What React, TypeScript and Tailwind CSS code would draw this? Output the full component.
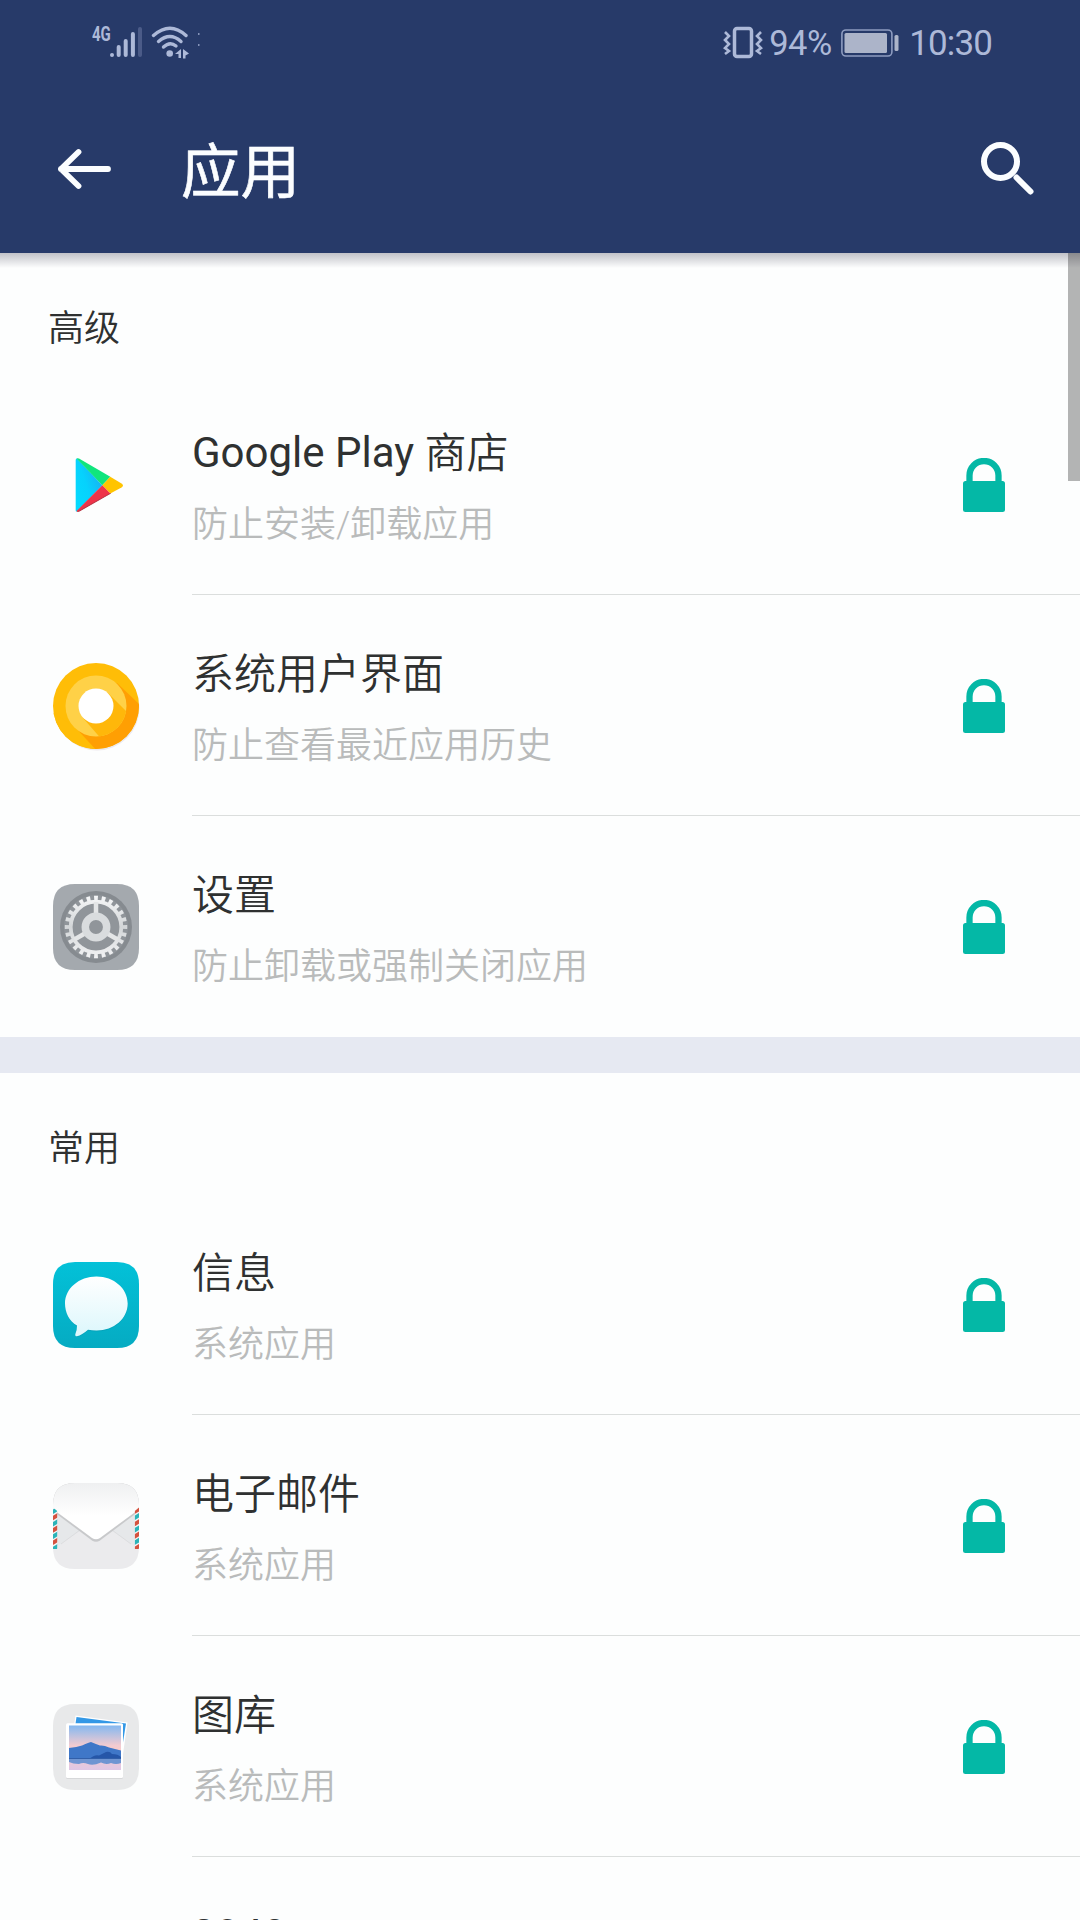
import type { ReactNode } from "react";

function SignalIcon() {
  return (
    <svg className="absolute left-[90px] top-[22px]" width="112" height="38" viewBox="0 0 112 38">
      <g stroke="#adb9d8" strokeLinecap="round" strokeWidth="4">
        <path d="M22 33v0" />
        <path d="M28.7 33v-8" />
        <path d="M35.7 33v-14" />
        <path d="M42.9 33v-21" />
        <path d="M50 33v-26" stroke="#4b5b88" />
      </g>
      <g fill="none" stroke="#adb9d8" strokeLinecap="round" strokeWidth="3.4">
        <path d="M63.500 13.500Q80 -1 96 13.500" />
        <path d="M68.500 19.500Q80 9.500 91 19.500" />
        <path d="M73.500 25Q80 19 86 24" />
      </g>
      <circle cx="79.700" cy="31.500" r="3.300" fill="#adb9d8" />
      <path d="M85 32l6-5v9h-2.500v-4zM93 27l6 4.500-3.500 2v3H93z" fill="#adb9d8" />
      <path d="M108 12h1.500M108 23h1.500" stroke="#8593b9" strokeWidth="2" />
    </svg>
  );
}

function VibrateIcon() {
  return (
    <svg width="40" height="34" viewBox="0 0 40 34" fill="none" stroke="#adb9d8">
      <rect x="11.500" y="2.500" width="17" height="28" rx="2.500" strokeWidth="3.500" />
      <path d="M2 6l4 4-4 4 4 4-4 4 4 3-4 3M38 6l-4 4 4 4-4 4 4 4-4 3 4 3" strokeWidth="2.600" />
    </svg>
  );
}

function BatteryIcon() {
  return (
    <svg width="58" height="28" viewBox="0 0 58 28">
      <rect x="0.900" y="1" width="50" height="26" rx="4" fill="none" stroke="#8e9cc0" strokeWidth="1.600" />
      <rect x="3.500" y="4" width="42.500" height="20" rx="1.500" fill="#acb4c9" />
      <rect x="53.500" y="6" width="4" height="16" rx="1.500" fill="#acb4c9" />
    </svg>
  );
}

function LockIcon() {
  return (
    <svg className="mt-[84px] shrink-0" width="42" height="54" viewBox="0 0 42 54">
      <path d="M6.500 25V17.500a14.500 14.500 0 0 1 29 0V25" fill="none" stroke="#04b8a6" strokeWidth="6.300" />
      <rect y="23" width="42" height="31" rx="2.500" fill="#04b8a6" />
    </svg>
  );
}

function Tile({ children }: { children: ReactNode }) {
  return (
    <svg className="mt-[68px] shrink-0 overflow-visible" width="86" height="86" viewBox="0 0 86 86">
      {children}
    </svg>
  );
}

const TILE_PATH = "M22 0H64Q86 0 86 22V64Q86 86 64 86H22Q0 86 0 64V22Q0 0 22 0Z";

function PlayIcon() {
  return (
    <Tile>
      <defs>
        <linearGradient id="playBlue" x1="0" y1="1" x2="1" y2="0.300">
          <stop offset="0" stopColor="#04dcff" />
          <stop offset="0.500" stopColor="#06d2fd" />
          <stop offset="1" stopColor="#1aaef2" />
        </linearGradient>
      </defs>
      <path d="M22.700 18v50.500q0 1.200 1 1L49.300 43.300 24 16.500q-1.300 0-1.300 1.500z" fill="url(#playBlue)" />
      <path d="M23.500 16.600q1-.8 2.500 0L57.300 34.700 49.300 43.300z" fill="#10e57d" />
      <path d="M57.300 34.700L68.500 41.500q3 2 0 4L57.300 51.400 49.300 43.300z" fill="#ffc400" />
      <path d="M49.300 43.300L57.300 51.400 26 69.300q-2 .8-2.500-.2z" fill="#ee3349" />
      <path d="M57.300 51L26 68.700q-2 .8-2.500 0 .7 1.600 3 .8L58 51.600z" fill="#b5303f" />
    </Tile>
  );
}

function SystemUiIcon() {
  return (
    <Tile>
      <defs>
        <clipPath id="outerDisc">
          <circle cx="43" cy="43" r="43" />
        </clipPath>
        <clipPath id="innerDisc">
          <circle cx="43" cy="43" r="30.500" />
        </clipPath>
      </defs>
      <circle cx="44" cy="45" r="42.500" fill="#ece9ef" />
      <circle cx="43" cy="43" r="43" fill="#ffbd07" />
      <path d="M64 20L86 41V90H40L22 64z" fill="#ff9f03" clipPath="url(#outerDisc)" />
      <path d="M22 64L46 90H0V50z" fill="#ffbd07" clipPath="url(#outerDisc)" />
      <circle cx="43" cy="43" r="30.500" fill="#ffd147" />
      <path d="M55 30L90 65 65 95 30 55z" fill="#ffb70a" clipPath="url(#innerDisc)" />
      <circle cx="43" cy="43" r="17.500" fill="#fff" />
    </Tile>
  );
}

function SettingsIcon() {
  return (
    <Tile>
      <defs>
        <linearGradient id="gearMetal" gradientUnits="userSpaceOnUse" x1="0" y1="12" x2="0" y2="74">
          <stop offset="0" stopColor="#f6f7f8" />
          <stop offset="0.500" stopColor="#d3d6d8" />
          <stop offset="1" stopColor="#f2f3f4" />
        </linearGradient>
      </defs>
      <path d={TILE_PATH} fill="#a4a9ae" />
      <circle cx="43" cy="43" r="36" fill="#868b90" />
      <circle cx="43" cy="43" r="32" fill="#90959a" />
      <g fill="none" stroke="url(#gearMetal)">
        <circle cx="43" cy="43" r="28.500" strokeWidth="5.500" pathLength="96" strokeDasharray="2 2" strokeDashoffset="1" />
        <circle cx="43" cy="43" r="25.300" strokeWidth="3.800" />
      </g>
      <g stroke="#e4e6e7" strokeWidth="4.500">
        <path d="M43 43L43 18" />
        <path d="M43 43L64.600 55.500" />
        <path d="M43 43L21.400 55.500" />
      </g>
      <circle cx="43" cy="43" r="10.700" fill="#90959a" stroke="#d9dcde" strokeWidth="7.500" />
    </Tile>
  );
}

function MessagesIcon() {
  return (
    <Tile>
      <defs>
        <linearGradient id="msgTile" x1="0" y1="0" x2="0" y2="1">
          <stop offset="0" stopColor="#03c1d8" />
          <stop offset="1" stopColor="#05abc2" />
        </linearGradient>
        <linearGradient id="msgBubble" x1="0" y1="0" x2="0" y2="1">
          <stop offset="0" stopColor="#fff" />
          <stop offset="1" stopColor="#dcf7fc" />
        </linearGradient>
      </defs>
      <path d={TILE_PATH} fill="url(#msgTile)" />
      <path
        d="M43.500 15C61 15 75 27 75 42S61 69.500 43.500 69.500Q39 69.500 35 68.500Q29 74 24 75Q21.500 75 22.500 72Q24 69 24 64.500C16 59.500 12 51 12 42C12 27 26 15 43.500 15Z"
        fill="#088fa5"
        opacity="0.350"
      />
      <path
        d="M43.500 14.500C61 14.500 74.700 26.500 74.700 41.500S61 68.500 43.500 68.500Q39 68.500 35 67.700Q29 73 24 74.300Q21.500 74.500 22.500 71.500Q24 68.500 24 63.500C16 59 12 50.500 12 41.500C12 26.500 26 14.500 43.500 14.500Z"
        fill="url(#msgBubble)"
      />
    </Tile>
  );
}

const STRIPES = [0, 1, 2, 3, 4, 5, 6];

function MailIcon() {
  return (
    <Tile>
      <defs>
        <linearGradient id="mailFlap" x1="0" y1="0" x2="0" y2="1">
          <stop offset="0" stopColor="#eeeff0" />
          <stop offset="0.600" stopColor="#fff" />
        </linearGradient>
        <clipPath id="mailTile">
          <path d={TILE_PATH} />
        </clipPath>
        <clipPath id="mailLeft">
          <path d="M0 24.500L4.200 28V66H0z" />
        </clipPath>
        <clipPath id="mailRight">
          <path d="M86 24.500L81.800 28V66H86z" />
        </clipPath>
      </defs>
      <path d={TILE_PATH} fill="#ebebed" />
      <path d="M0 24L28 47 0 66zM86 24L58 47 86 66z" fill="#e6e8ea" />
      <path d="M27 47L8 61M59 47L78 61" stroke="#dcdddf" strokeWidth="1" />
      <g clipPath="url(#mailTile)">
        <path d="M-3 26L39 57.500q4 2.500 8 0L89 26V0H0z" fill="#c8c9cb" />
        <path d="M-3 24L39 55q4 2.500 8 0L89 24V-2H-2z" fill="url(#mailFlap)" />
      </g>
      <g clipPath="url(#mailLeft)">
        <path d="M0 24h5v42H0z" fill="#f2f3f4" />
        {STRIPES.map((i) => (
          <path key={i} d={`M0 ${26.500 + i * 6.200}l5-3v4.600l-5 3z`} fill={i % 2 ? "#d4523f" : "#2bb3b8"} />
        ))}
      </g>
      <g clipPath="url(#mailRight)">
        <path d="M81 24h5v42h-5z" fill="#f2f3f4" />
        {STRIPES.map((i) => (
          <path key={i} d={`M81.500 ${26.500 + i * 6.200}l5-3v4.600l-5 3z`} fill={i % 2 ? "#2bb3b8" : "#d4523f"} />
        ))}
      </g>
    </Tile>
  );
}

function GalleryIcon() {
  return (
    <Tile>
      <defs>
        <linearGradient id="sky" x1="0" y1="0" x2="0" y2="1">
          <stop offset="0" stopColor="#84b8f0" />
          <stop offset="0.450" stopColor="#f3cbd0" />
          <stop offset="0.600" stopColor="#f8ccc9" />
          <stop offset="1" stopColor="#dfc7e6" />
        </linearGradient>
      </defs>
      <path d={TILE_PATH} fill="#e8e9ea" />
      <path d="M22.500 11.500L74.500 18.500 68 64 16 57z" fill="#fff" />
      <path d="M23.500 13L73 19.500 67 57 18 50z" fill="#3398e6" />
      <rect x="13" y="20" width="57" height="55" rx="1.500" fill="#d7d8da" />
      <rect x="13" y="19.300" width="57" height="54.700" rx="1.500" fill="#fff" />
      <path d="M16 21.500H68V66H16z" fill="url(#sky)" />
      <path d="M16 44Q24 43 29 41.500Q35 38.500 38 38Q42 39.500 47 41.500Q51 41 56 43.500L68 46.500V57H16z" fill="#3f77c8" />
      <path d="M36 55Q42 50 46 51.500L53 48Q57 47 59 50Q65 50 68 53V56H36z" fill="#2556a8" />
      <path d="M16 55H68V59Q63 61 58 59Q53 61 48 58.500Q40 62 35 60Q30 58 26 60Q20 60 16 58z" fill="#6f95d2" />
      <path d="M16 54.500H68" stroke="#315fa9" strokeWidth="1.200" />
    </Tile>
  );
}

interface AppEntry {
  latin?: string;
  title?: string;
  detail: string;
  icon: ReactNode;
}

const ADVANCED: AppEntry[] = [
  { latin: "Google Play ", title: "商店", detail: "防止安装/卸载应用", icon: <PlayIcon /> },
  { title: "系统用户界面", detail: "防止查看最近应用历史", icon: <SystemUiIcon /> },
  { title: "设置", detail: "防止卸载或强制关闭应用", icon: <SettingsIcon /> },
];

const COMMON: AppEntry[] = [
  { title: "信息", detail: "系统应用", icon: <MessagesIcon /> },
  { title: "电子邮件", detail: "系统应用", icon: <MailIcon /> },
  { title: "图库", detail: "系统应用", icon: <GalleryIcon /> },
  { latin: "2048", detail: "", icon: null },
];

function AppRow({ entry, divider }: { entry: AppEntry; divider: boolean }) {
  return (
    <li className="flex h-[221px] pl-[53px]">
      <div className="w-[139px] shrink-0">{entry.icon}</div>
      <div className={`flex flex-1 justify-between pr-[75px] ${divider ? "border-b border-[#dbdedd]" : ""}`}>
        <div className="pt-[50px]">
          <h3 className="flex h-[60px] text-[42px] leading-[60px] font-[350] whitespace-pre text-[#2f3131]">
            {entry.latin && (
              <span className={entry.title ? "-mt-[1px] font-normal" : "-mt-[2px] font-normal"}>{entry.latin}</span>
            )}
            {entry.title && <span>{entry.title}</span>}
          </h3>
          <p className="mt-[11px] h-[60px] text-[36px] leading-[60px] font-[350] text-[#b9bbbb]">{entry.detail}</p>
        </div>
        <LockIcon />
      </div>
    </li>
  );
}

function Section({ title, entries, last }: { title: string; entries: AppEntry[]; last?: boolean }) {
  return (
    <section>
      <h2 className="h-[121px] pt-[46px] pl-[48px] text-[36px] leading-[60px] font-[350] text-[#2f3131]">{title}</h2>
      <ul>
        {entries.map((entry, i) => (
          <AppRow key={i} entry={entry} divider={last || i < entries.length - 1} />
        ))}
      </ul>
    </section>
  );
}

export default function App() {
  return (
    <div className="relative flex h-[1920px] w-[1080px] flex-col overflow-hidden bg-[#fdfefe] font-['Roboto','Noto_Sans_CJK_SC',sans-serif]">
      <header className="relative h-[253px] shrink-0 bg-[#273a69]">
        <div className="flex h-[86px] items-center justify-end pr-[88px] text-[35px] text-[#adb9d8]">
          <span className="absolute top-[24px] left-[92px] text-[20px] leading-[20px] font-bold">
            <span className="inline-block origin-left scale-x-75">4G</span>
          </span>
          <SignalIcon />
          <VibrateIcon />
          <span className="ml-[6px] w-[62px] pt-[2px] text-[34.500px] tracking-[-0.6px] whitespace-nowrap">94%</span>
          <span className="ml-[10px]">
            <BatteryIcon />
          </span>
          <span className="ml-[10px] pt-[2px] tracking-[-0.9px]">10:30</span>
        </div>
        <div className="flex h-[167px] items-start pr-[45px] pl-[57px]">
          <svg className="mt-[62px]" width="54" height="42" viewBox="0 0 54 42" fill="none" stroke="#fbfdff" strokeWidth="5.800" strokeLinecap="round" strokeLinejoin="round">
            <path d="M21.500 4L4 21l17.500 17M4 21h47" />
          </svg>
          <h1 className="mt-[44px] ml-[70px] flex-1 text-[59.500px] leading-[87px] text-[#fbfdff] [-webkit-text-stroke:0.6px_#fbfdff]">应用</h1>
          <svg className="mt-[56px]" width="54" height="54" viewBox="0 0 54 54" fill="none" stroke="#fbfdff" strokeWidth="6">
            <circle cx="19.500" cy="19.500" r="16.500" />
            <path d="M35.500 35.500L49.500 49.500" strokeLinecap="round" />
          </svg>
        </div>
      </header>
      <main className="relative">
        <div className="pointer-events-none absolute inset-x-0 top-0 h-[15px] bg-linear-to-b from-[#26263c]/28 to-transparent" />
        <div className="absolute top-0 right-0 h-[228px] w-[12px] bg-black/29" />
        <Section title="高级" entries={ADVANCED} />
        <div className="h-[36px] bg-[#e6e9f2]" />
        <Section title="常用" entries={COMMON} last />
      </main>
    </div>
  );
}
